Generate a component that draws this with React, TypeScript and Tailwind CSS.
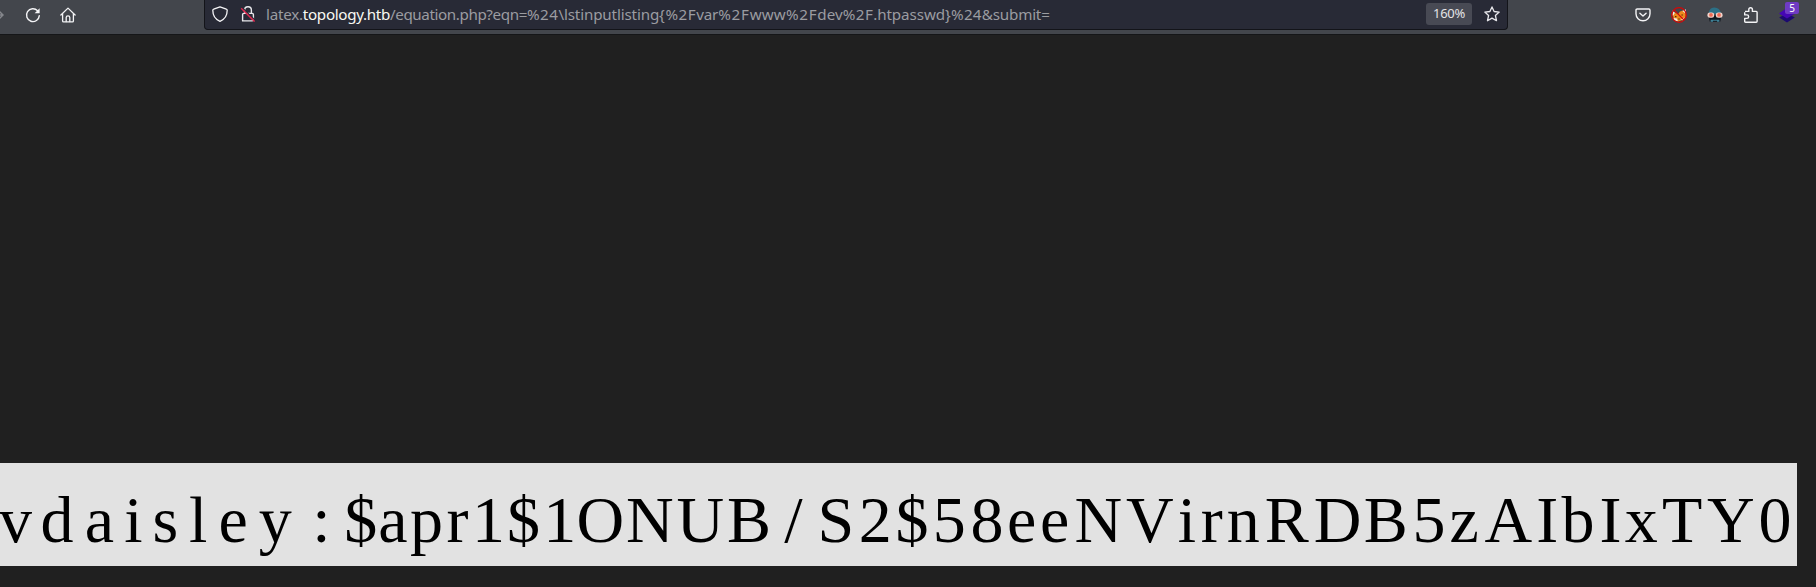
import React from "react";

type Glyph = [char: string, x: number];

// Each character with the x position of its origin inside the rendered line.
const LINE: Glyph[] = [
  ["v", -1], ["d", 40.5], ["a", 84.8], ["i", 124.3], ["s", 152.5], ["l", 189], ["e", 218.4], ["y", 258.8],
  [":", 312.2], ["$", 344.3], ["a", 378.2], ["p", 410], ["r", 446.6], ["1", 472], ["$", 507.2], ["1", 543.3],
  ["O", 576.6], ["N", 626.2], ["U", 676.7], ["B", 727], ["/", 784.3], ["S", 817.7], ["2", 858.9], ["$", 895.6],
  ["5", 932.8], ["8", 970.6], ["e", 1007.1], ["e", 1040.1], ["N", 1074.6], ["V", 1126.1], ["i", 1177.9],
  ["r", 1201], ["n", 1227], ["R", 1264.9], ["D", 1314], ["B", 1364], ["5", 1412.6], ["z", 1449.6],
  ["A", 1484.7], ["I", 1536.5], ["b", 1561.8], ["I", 1599.8], ["x", 1624.9], ["T", 1662.2], ["Y", 1707.3],
  ["0", 1758.7],
];

const LINE_END = 1797;

// Path and query of the address, each piece with its own tracking.
const URL_PARTS: [text: string, tracking: string][] = [
  ["/equation.php?eqn=", "tracking-[-0.4px]"],
  ["%24", "tracking-[0.5px]"],
  ["\\lstinputlisting", "tracking-[-0.15px]"],
  ["{%2F", "tracking-[0.55px]"],
  ["var", "tracking-[-0.2px]"],
  ["%2F", "tracking-[0.8px]"],
  ["www", "tracking-[0.1px]"],
  ["%2F", "tracking-[0.7px]"],
  ["dev", "tracking-[0.1px]"],
  ["%2F", "tracking-[0.4px]"],
  [".htpasswd", "tracking-[-0.1px]"],
  ["}%24", "tracking-[0.27px]"],
  ["&submit=", "tracking-[-0.2px]"],
];

function Reload() {
  return (
    <svg className="size-4 shrink-0" viewBox="0 0 16 16" fill="none" stroke="#f4f4f6" strokeWidth="1.4">
      <path d="M14.3 8.6A6.4 6.4 0 1 1 12.6 3.8" strokeLinecap="round" />
      <path d="M14.6 1.2v5h-5z" fill="#f4f4f6" stroke="none" />
    </svg>
  );
}

function Home() {
  return (
    <svg className="size-4 shrink-0" viewBox="0 0 16 16" fill="none" stroke="#f4f4f6" strokeWidth="1.3" strokeLinejoin="round" strokeLinecap="round">
      <path d="M.9 8 8 1.1 15.1 8M2.6 6.8v7.1a1 1 0 0 0 1 1h8.8a1 1 0 0 0 1-1V6.8" />
      <path d="M6.2 14.6v-4a1.8 1.8 0 0 1 3.6 0v4" />
    </svg>
  );
}

function Shield() {
  return (
    <svg className="size-4 shrink-0" viewBox="0 0 16 16" fill="none" stroke="#f4f4f6" strokeWidth="1.3" strokeLinejoin="round">
      <path d="M8 .8 14.3 3.1c.6.2.9.6.9 1.2 0 5-2.2 9-7.2 11-5-2-7.2-6-7.2-11 0-.6.3-1 .9-1.2z" />
    </svg>
  );
}

function BrokenLock() {
  return (
    <svg className="size-4 shrink-0" viewBox="0 0 16 16" fill="none" stroke="#e8e8ec" strokeWidth="1.4" strokeLinejoin="round">
      <path d="M4.6 7.3V4.2a3.4 3.4 0 0 1 6.8 0v3.1M2.6 14.9V8.6q0-1.2 1.2-1.2h8.4q1.2 0 1.2 1.2v5q0 1.3-1.2 1.3z" />
      <path d="M2.3 1.7 15 14.2" stroke="#282a36" strokeWidth="1.4" />
      <path d="M1.2 2.2 14.6 15.6" stroke="#e22850" strokeWidth="1.4" />
    </svg>
  );
}

function Star() {
  return (
    <svg className="size-4 shrink-0" viewBox="0 0 16 16" fill="none" stroke="#e8e8ec" strokeWidth="1.3" strokeLinejoin="round">
      <path d="M8 .9 10.1 5.5 15.2 6.1 11.4 9.5 12.5 14.7 8 12.1 3.5 14.7 4.6 9.5.8 6.1 5.9 5.5z" />
    </svg>
  );
}

function Pocket() {
  return (
    <svg className="h-[14px] w-4 shrink-0" viewBox="0 0 16 14" fill="none" stroke="#f4f4f6" strokeWidth="1.4" strokeLinecap="round" strokeLinejoin="round">
      <path d="M2.2 1h11.6q1.2 0 1.2 1.2v3.6a7 7 0 0 1-14 0V2.2Q1 1 2.2 1z" />
      <path d="M4.9 5.2 8 8.1l3.1-2.9" />
    </svg>
  );
}

function BlockedFox() {
  return (
    <svg className="size-4 shrink-0" viewBox="0 0 16 16">
      <path d="M1.5 7 4 5.5l3 1.8L9 4.6l3-1 2.6 1.6.2 4.3-2.4 3.2-5.3 1.8-4-1.6z" fill="#ee8a1c" />
      <path d="m1 3.6 3 2.2L1.8 9zM15 2.2 11.4 4l3.2 2.6z" fill="#f3eee6" />
      <path d="m2.4 11 3.4.6L7 14.2l-3.4-.8zM10 12.2l3.6-1.6-1.8 2.8z" fill="#f3eee6" />
      <path d="M4 9.6h1.5M10.4 8h1.5M7.2 12h1.6" stroke="#5a2a10" strokeWidth="1.2" />
      <circle cx="8" cy="8" r="7.3" fill="none" stroke="#d40808" strokeWidth="1.3" />
      <path d="m2.9 2.9 10.2 10.2" stroke="#d40808" strokeWidth="1.3" />
    </svg>
  );
}

function Spy() {
  return (
    <svg className="size-4 shrink-0" viewBox="0 0 16 16">
      <path d="M1.6 7Q1.8 2 5.6.8q6.6-1.4 8.8 6.2z" fill="#2c7086" />
      <path d="M1.4 8h13.2l-1.4 6.8H2.8z" fill="#10171d" />
      <path d="M3.6 12.8h8.8v2H10v-1H6v1H3.6z" fill="#3f8298" />
      <rect x=".4" y="5.4" width="6.8" height="5.4" rx="2.4" fill="#f1d3ca" />
      <rect x="8.8" y="5.4" width="6.8" height="5.4" rx="2.4" fill="#f1d3ca" />
      <circle cx="4" cy="7.9" r="1.9" fill="#ee6a54" />
      <circle cx="12" cy="7.9" r="1.9" fill="#ee6a54" />
    </svg>
  );
}

function Puzzle() {
  return (
    <svg className="size-4 shrink-0" viewBox="0 0 16 16" fill="none" stroke="#f4f4f6" strokeWidth="1.4" strokeLinejoin="round">
      <path d="M2 4.4h3.8V2.6a1.8 1.8 0 0 1 3.6 0v1.8h3.8q.9 0 .9.9v9q0 .9-.9.9H2.6q-.9 0-.9-.9v-2.9h2.2a1.7 1.7 0 0 0 0-3.5H1.7V5.3" />
    </svg>
  );
}

function Layers() {
  return (
    <div className="relative size-4 shrink-0">
      <svg className="size-4" viewBox="0 0 16 16">
        <path d="M8 6.2 15.8 10.6 8 15.6.2 10.6z" fill="#1c0a70" />
        <path d="M8 .8 16 6.4 8 11.6 0 6.4z" fill="#4506b4" />
      </svg>
      <span className="absolute -top-[5px] left-[6px] flex h-[12px] w-[14px] items-center justify-center rounded-[2px] bg-[#6f3bc4] text-[10px] leading-none text-white">
        5
      </span>
    </div>
  );
}

export default function App() {
  return (
    <div className="flex h-[587px] w-full flex-col overflow-hidden bg-[#202020] font-['Noto_Sans',sans-serif]">
      <header className="flex h-[35px] shrink-0 items-start border-b border-[#151618] bg-[#43464c]">
        <div className="flex h-[30px] w-[204px] items-center">
          <svg className="-ml-3 size-4 shrink-0" viewBox="0 0 16 16" fill="none" stroke="#85878c" strokeWidth="1.5">
            <path d="M1 8h14M10 3l5 5-5 5" />
          </svg>
          <span className="ml-[21px] flex"><Reload /></span>
          <span className="ml-[19px] flex"><Home /></span>
        </div>
        <div className="flex h-[30px] w-[1304px] items-center rounded-b-[4px] border-x border-b border-[#131419] bg-[#282a36] pb-px pl-[7px]">
          <Shield />
          <span className="ml-3 flex"><BrokenLock /></span>
          <p className="ml-[10px] flex-1 whitespace-pre pb-px text-[15.2px] leading-[20px] text-[#9b9ca1]">
            <span className="tracking-[-0.24px]">latex.</span>
            <span className="tracking-[-0.33px] text-[#f8f8f2]">topology.htb</span>
            {URL_PARTS.map(([text, tracking], i) => (
              <span key={i} className={tracking}>{text}</span>
            ))}
          </p>
          <span className="flex h-[22px] w-[46px] items-center justify-center rounded-[3px] bg-[#484a54] text-[13px] tracking-[-0.3px] text-[#e4e4e6]">
            160%
          </span>
          <span className="mr-[7px] ml-3 flex"><Star /></span>
        </div>
        <div className="flex h-[29px] flex-1 items-center justify-end gap-5 pr-[21px]">
          <Pocket />
          <BlockedFox />
          <Spy />
          <Puzzle />
          <Layers />
        </div>
      </header>
      <main className="flex flex-1 flex-col justify-end pb-[21px]">
        <div className="flex h-[103px] w-[1797px] overflow-hidden bg-[#e2e2e2] pt-[19px] font-['Liberation_Serif',serif] text-[66px] leading-[76px] text-black">
          {LINE.map(([char, x], i) => (
            <span
              key={i}
              className="block shrink-0 whitespace-pre"
              style={{
                width: (i + 1 < LINE.length ? LINE[i + 1][1] : LINE_END) - x,
                marginLeft: i === 0 ? x : 0,
              }}
            >
              {char}
            </span>
          ))}
        </div>
      </main>
    </div>
  );
}
